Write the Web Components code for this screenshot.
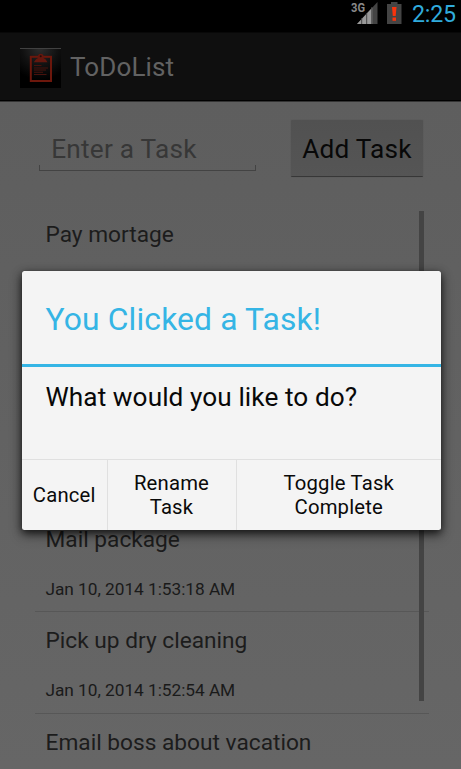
<!DOCTYPE html>
<html lang="en">
<head>
<meta charset="utf-8">
<title>ToDoList</title>
<style>
html, body { margin: 0; height: 100%; overflow: hidden; background: #000; }
body { font-family: Roboto, "Noto Sans", sans-serif; }
</style>
</head>
<body>
<todo-app></todo-app>
<script>
function define(name, html) {
  const template = document.createElement('template');
  template.innerHTML = html;
  customElements.define(name, class extends HTMLElement {
    constructor() {
      super();
      this.attachShadow({ mode: 'open' }).append(template.content.cloneNode(true));
    }
  });
}

define('status-bar', `
<style>
:host { display: flex; box-sizing: border-box; height: 32px; padding: 0 5px 0 0; justify-content: flex-end; background: #000; }
svg { display: block; flex: none; }
.net { font: bold 13px/12px "Roboto", sans-serif; fill: #8a8a8a; }
.time { width: 44px; margin-left: 9px; font-size: 23.2px; line-height: 29px; letter-spacing: -.2px; color: #30abdc; white-space: nowrap; }
</style>
<svg width="53" height="31" viewBox="350 0 53 31">
  <path d="M357 24 377.500 2V24Z" fill="#444"/>
  <path d="M357 24 372.300 7.600V24Z" fill="#999"/>
  <path d="M361.700 18V24M366.700 13V24M371.800 7V24" stroke="#444" stroke-width="1"/>
  <text class="net" x="351" y="11.500" textLength="14" lengthAdjust="spacingAndGlyphs">3G</text>
  <path d="M387 4H391V2H397.500V4H401.500V24H387Z" fill="#444"/>
  <path d="M392 7H396.500L395.700 16H392.800Z" fill="#f8330c"/>
  <rect x="392.500" y="17.500" width="3.500" height="3.300" fill="#f8330c"/>
</svg>
<span class="time">2:25</span>`);

define('action-bar', `
<style>
:host { display: flex; box-sizing: border-box; height: 70px; padding: 15px 0 0 20px; align-items: flex-start; gap: 9px;
  background: #0f0f0f; border-top: 1px solid #080808; border-bottom: 1px solid #333; box-shadow: inset 0 -1px #000; color: #626262; }
svg { display: block; flex: none; }
span { font-size: 26px; line-height: 39px; letter-spacing: .1px; white-space: nowrap; }
</style>
<svg width="41" height="40" viewBox="20 48 41 40">
  <defs><radialGradient id="g" gradientUnits="userSpaceOnUse" cx="40" cy="48" r="32">
    <stop offset="0" stop-color="#2d2d2d"/><stop offset=".55" stop-color="#111"/><stop offset="1" stop-color="#000"/>
  </radialGradient></defs>
  <rect x="20" y="48" width="41" height="40" fill="url(#g)"/>
  <path d="M20 48.500H61" stroke="#414141"/>
  <rect x="30.800" y="56.800" width="20.200" height="24.200" fill="none" stroke="#6c170c" stroke-width="2"/>
  <path d="M33.800 62.300 36 59.200 38 58V56.500A2.700 2.700 0 0 1 43.500 56.500V58L45.500 59.200 47.600 62.300Z" fill="#64170e"/>
  <circle cx="40.700" cy="56.300" r="1" fill="#250b08"/>
  <path d="M34 65.500H41.500M34 68H48M34 70H46M34 72.200H43M34 74.500H46.500" stroke="#48120d" stroke-width="1.100"/>
</svg>
<span>ToDoList</span>`);

define('task-input', `
<style>
:host { display: block; box-sizing: border-box; width: 217px; height: 51px; padding-left: 12.200px;
  font-size: 26.2px; line-height: 58px; letter-spacing: .25px; color: #373737; white-space: nowrap;
  background:
    linear-gradient(#434343, #434343) left bottom / 1px 6px no-repeat,
    linear-gradient(#434343, #434343) right bottom / 1px 6px no-repeat,
    linear-gradient(#434343, #434343) left bottom / 100% 1px no-repeat; }
</style><slot></slot>`);

define('add-button', `
<style>
:host { display: block; box-sizing: border-box; width: 132px; height: 57px; text-align: center; border-radius: 1px;
  font-size: 26.2px; line-height: 58px; letter-spacing: .2px; color: #080808; white-space: nowrap;
  background: linear-gradient(#515151, #555); border-bottom: 1px solid #373737; box-shadow: 0 0 1px #4b4b4b; }
</style><slot></slot>`);

define('task-row', `
<style>
:host { display: flex; flex-direction: column; flex: none; box-sizing: border-box; height: 101.600px; padding-left: 10.500px;
  border-bottom: 1px solid #575757; color: #1c1c1c; white-space: nowrap; }
.title { height: 57px; font-size: 22.7px; line-height: 57px; }
.date { height: 43px; font-size: 17.3px; line-height: 43px; letter-spacing: -.04px; color: #1a1a1a; }
</style>
<div class="title"><slot></slot></div>
<div class="date"><slot name="date"></slot></div>`);

define('task-list', `
<style>
:host { display: flex; position: relative; flex-direction: column; min-height: 0; flex: 1; overflow: hidden; margin: 0 32px 0 35px; }
.bar { position: absolute; top: 5px; right: 5px; width: 5px; height: 490px; background: #444; }
</style><slot></slot><div class="bar"></div>`);

define('dialog-button', `
<style>
:host { display: flex; align-items: center; justify-content: center; box-sizing: border-box; padding-top: 2px; text-align: center;
  font-size: 20.300px; line-height: 23.500px; letter-spacing: .18px; color: #0a0a0a; }
:host(:not(:first-child)) { border-left: 1px solid #e0e0e0; }
</style><span><slot></slot></span>`);

define('choice-dialog', `
<style>
:host { display: flex; flex-direction: column; box-sizing: border-box; background: #f4f4f4; border-radius: 2.500px; overflow: hidden;
  box-shadow: 0 0 1px #333, 0 3px 9px rgba(0,0,0,.75), 0 5px 14px rgba(0,0,0,.3); }
.title { box-sizing: border-box; height: 96px; border-bottom: 3px solid #35b5e5; padding-left: 23.500px; font-size: 31.800px; line-height: 96px; letter-spacing: .15px; color: #35b5e5; white-space: nowrap; }
.message { height: 92px; padding-left: 23.500px; font-size: 26.2px; line-height: 61px; letter-spacing: .08px; color: #080808; white-space: nowrap; }
.actions { display: grid; flex: 1; grid-template-columns: 84.500px 129px 1fr; border-top: 1px solid #e0e0e0; }
</style>
<div class="title"><slot name="title"></slot></div>
<div class="message"><slot name="message"></slot></div>
<div class="actions">
  <dialog-button>Cancel</dialog-button>
  <dialog-button>Rename<br>Task</dialog-button>
  <dialog-button>Toggle Task<br>Complete</dialog-button>
</div>`);

define('todo-app', `
<style>
:host { display: flex; position: relative; flex-direction: column; width: 461px; height: 769px; overflow: hidden; }
main { display: flex; flex-direction: column; flex: 1; min-height: 0; background: linear-gradient(#5e5e5e, #666); }
.entry { display: flex; flex: none; box-sizing: border-box; height: 104px; padding: 18px 38px 0 39px; justify-content: space-between; }
choice-dialog { position: absolute; left: 22px; top: 270.500px; width: 419px; height: 259px; }
</style>
<status-bar></status-bar>
<action-bar></action-bar>
<main>
  <div class="entry"><task-input>Enter a Task</task-input><add-button>Add Task</add-button></div>
  <task-list>
    <task-row>Pay mortage</task-row>
    <task-row></task-row>
    <task-row></task-row>
    <task-row>Mail package<span slot="date">Jan 10, 2014 1:53:18 AM</span></task-row>
    <task-row>Pick up dry cleaning<span slot="date">Jan 10, 2014 1:52:54 AM</span></task-row>
    <task-row>Email boss about vacation</task-row>
  </task-list>
</main>
<choice-dialog><span slot="title">You Clicked a Task!</span><span slot="message">What would you like to do?</span></choice-dialog>`);
</script>
</body>
</html>
